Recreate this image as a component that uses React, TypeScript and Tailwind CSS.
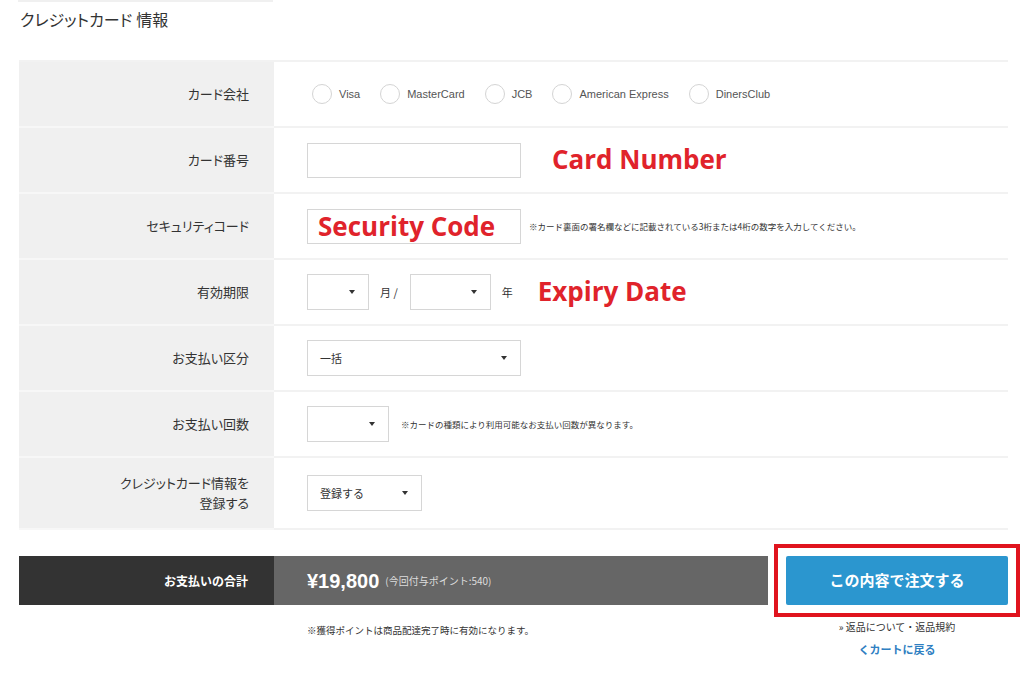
import React from 'react';

const jp = '"Noto Sans CJK JP", "Liberation Sans", sans-serif';
const latin = '"Liberation Sans", "Noto Sans CJK JP", sans-serif';

const Arrow = () => (
  <span className="w-0 h-0 border-l-[3px] border-r-[3px] border-t-[4px] border-l-transparent border-r-transparent border-t-[#333]" />
);

const Select = ({ width, value }: { width: string; value?: string }) => (
  <div className={`${width} h-[36px] border border-[#d6d6d6] bg-white flex items-center justify-between pl-[12px] pr-[13px] text-[11px] text-[#333]`}>
    <span>{value}</span>
    <Arrow />
  </div>
);

const Row = ({ label, children, tall }: { label: React.ReactNode; children: React.ReactNode; tall?: boolean }) => (
  <div className="grid grid-cols-[255px_1fr]">
    <div className={`bg-[#f0f0f0] border-b-2 border-[#f7f7f7] flex items-center justify-end pr-[25px] text-right text-[13px] leading-[20px] text-[#333] [font-feature-settings:'palt'] ${tall ? 'h-[72px]' : 'h-[66px]'}`}>
      {label}
    </div>
    <div className="border-b-2 border-[#f2f2f2] flex items-center pl-[33px]">{children}</div>
  </div>
);

const brands = ['Visa', 'MasterCard', 'JCB', 'American Express', 'DinersClub'];

const Red = ({ children }: { children: React.ReactNode }) => (
  <span className="text-[#e0232b] font-bold text-[26px] leading-none" style={{ fontFamily: '"Open Sans", sans-serif' }}>
    {children}
  </span>
);

export default function App() {
  return (
    <div className="w-[1024px] h-[675px] bg-white overflow-hidden" style={{ fontFamily: jp }}>
      <div className="ml-[18px] w-[255px] h-[2px] bg-[#f0f0f0]" />
      <h1 className="ml-[20px] mt-[7px] text-[16px] leading-[20px] text-[#333] [font-feature-settings:'palt']">
        クレジットカード<span className="ml-[4px]">情報</span>
      </h1>

      <div className="ml-[19px] w-[989px] mt-[31px] border-t-2 border-[#f2f2f2]">
        <Row label="カード会社">
          <div className="flex items-center pl-[5px] text-[11px] text-[#555]" style={{ fontFamily: latin }}>
            {brands.map(b => (
              <div key={b} className="flex items-center mr-[20px]">
                <span className="w-[20px] h-[20px] rounded-full border border-[#d4d4d4] mr-[7px]" />
                <span>{b}</span>
              </div>
            ))}
          </div>
        </Row>

        <Row label="カード番号">
          <div className="w-[214px] h-[35px] border border-[#d6d6d6] bg-white" />
          <div className="ml-[31px]"><Red>Card Number</Red></div>
        </Row>

        <Row label="セキュリティコード">
          <div className="w-[214px] h-[35px] border border-[#d6d6d6] bg-white flex items-center pl-[10px]">
            <Red>Security Code</Red>
          </div>
          <span className="ml-[8px] text-[8.5px] text-[#333]">※カード裏面の署名欄などに記載されている3桁または4桁の数字を入力してください。</span>
        </Row>

        <Row label="有効期限">
          <Select width="w-[62px]" />
          <span className="ml-[11px] mr-[12px] text-[11px] text-[#333]">月 /</span>
          <Select width="w-[81px]" />
          <span className="ml-[11px] text-[11px] text-[#333]">年</span>
          <div className="ml-[25px]"><Red>Expiry Date</Red></div>
        </Row>

        <Row label="お支払い区分">
          <Select width="w-[214px]" value="一括" />
        </Row>

        <Row label="お支払い回数">
          <Select width="w-[82px]" />
          <span className="ml-[12px] text-[8.5px] text-[#333]">※カードの種類により利用可能なお支払い回数が異なります。</span>
        </Row>

        <Row tall label={<span>クレジットカード情報を<br />登録する</span>}>
          <Select width="w-[115px]" value="登録する" />
        </Row>
      </div>

      <div className="ml-[19px] mt-[14px] flex items-start">
        <div>
          <div className="mt-[12px] flex h-[49px]">
            <div className="w-[255px] bg-[#333] flex items-center justify-end pr-[26px] text-white text-[12px] font-bold">
              お支払いの合計
            </div>
            <div className="w-[494px] bg-[#666] flex items-center pl-[33px] text-white">
              <span className="text-[20px] font-bold" style={{ fontFamily: latin }}>¥19,800</span>
              <span className="ml-[6px] text-[10px] text-[#ddd]">(今回付与ポイント:540)</span>
            </div>
          </div>
          <p className="mt-[18px] ml-[288px] text-[9.5px] text-[#333]">※獲得ポイントは商品配達完了時に有効になります。</p>
        </div>

        <div className="ml-[6px] flex flex-col items-center">
          <div className="border-4 border-[#e0141e] p-[8px]">
            <button className="w-[222px] h-[49px] bg-[#2b96cf] rounded-[2px] text-white text-[15px] font-bold">
              この内容で注文する
            </button>
          </div>
          <p className="mt-[2px] text-[10px] text-[#333]">» 返品について・返品規約</p>
          <p className="mt-[7px] text-[11px] font-bold text-[#2f80c2]">くカートに戻る</p>
        </div>
      </div>
    </div>
  );
}
